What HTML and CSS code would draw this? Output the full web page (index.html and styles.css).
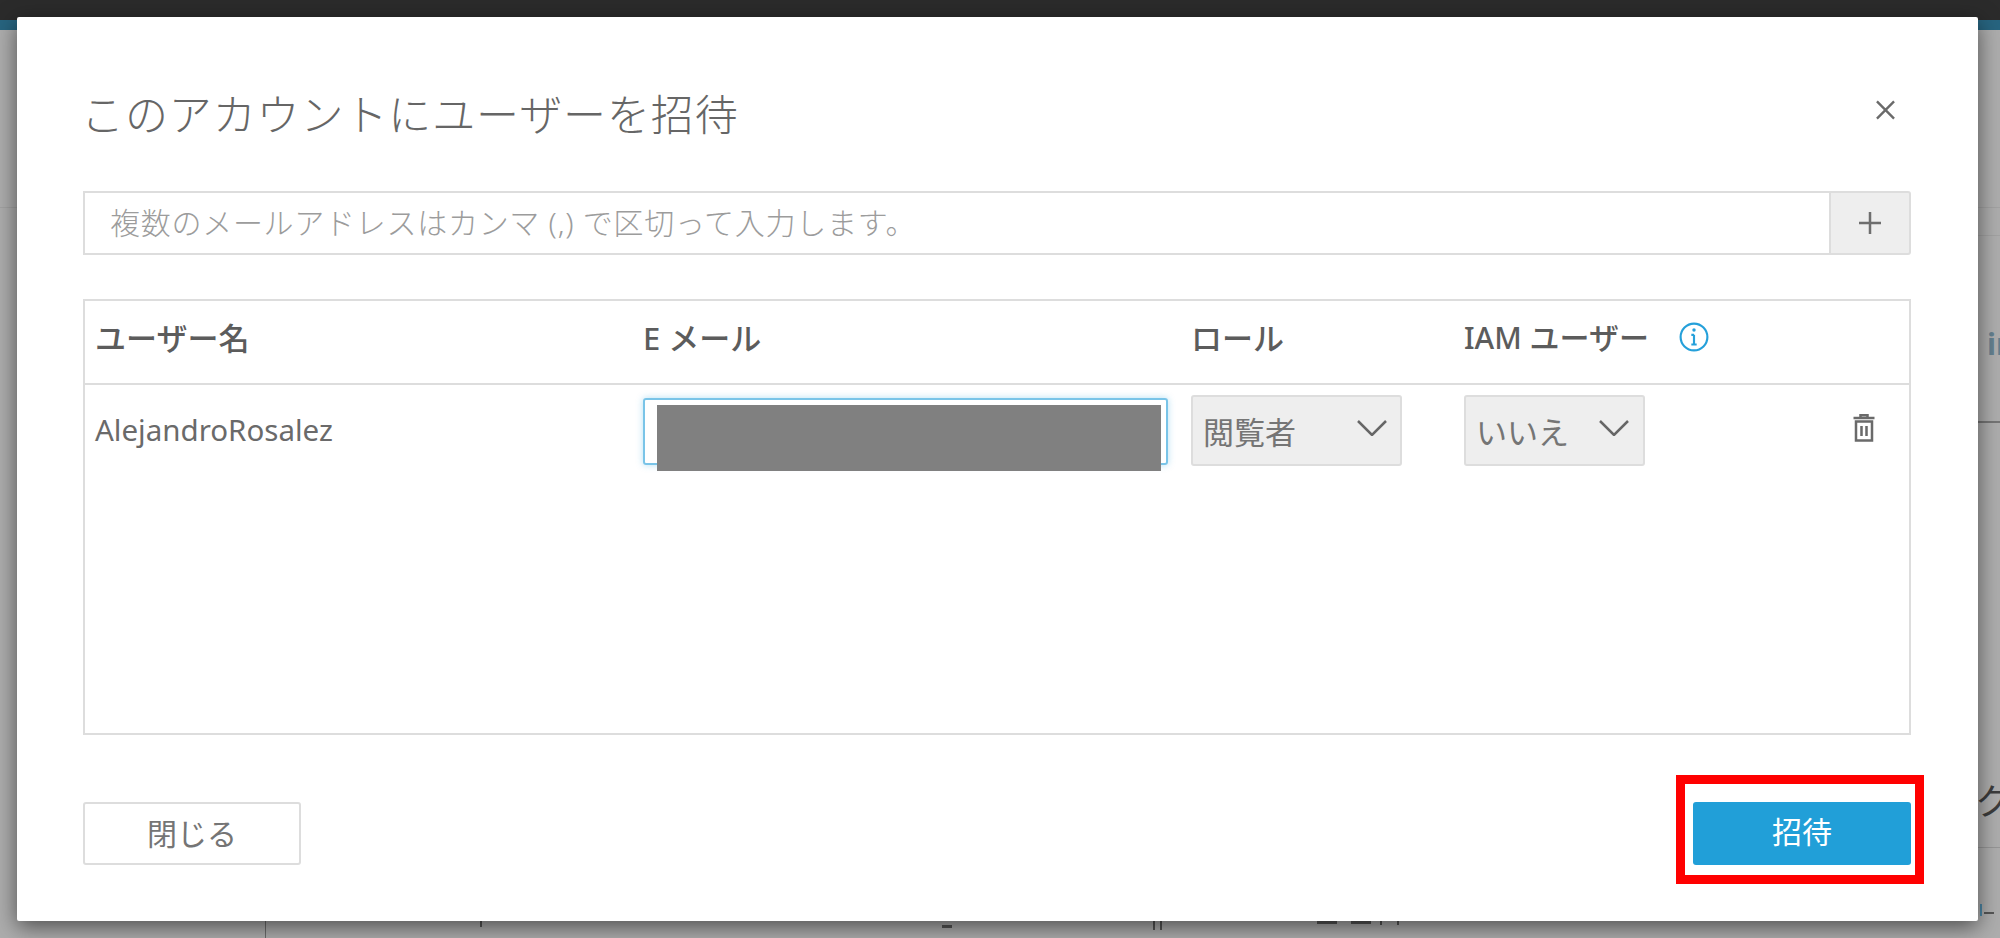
FILE: index.html
```html
<!DOCTYPE html>
<html>
  <head>
    <title>このアカウントにユーザーを招待</title>
    <link rel="stylesheet" href="styles.css">
  </head>

  <body>
    <div class="page-behind">
      <div class="top-bar"></div>
      <div class="nav-bar"></div>
      <div class="back-line line-207"></div>
      <div class="back-line line-235"></div>
      <div class="back-line line-421"></div>
      <div class="back-line line-847"></div>
      <div class="back-text text-in">in</div>
      <div class="back-text text-ku">ク</div>
      <div class="back-mark mark-v"></div>
      <div class="back-mark mark-a"></div>
      <div class="back-mark mark-b"></div>
      <div class="back-mark mark-c"></div>
      <div class="back-mark mark-d"></div>
      <div class="back-mark mark-e"></div>
      <div class="back-mark mark-f"></div>
      <div class="back-mark mark-g"></div>
      <div class="back-mark mark-h"></div>
      <div class="back-mark mark-i"></div>
      <div class="back-mark mark-j"></div>
    </div>

    <div class="modal">
      <div class="modal-header">
        <h1 class="modal-title">このアカウントにユーザーを招待</h1>
        <svg class="close-icon" viewBox="0 0 20 20">
          <path d="M1 1 L19 19 M19 1 L1 19"></path>
        </svg>
      </div>

      <div class="add-row">
        <div class="add-input">複数のメールアドレスはカンマ (,) で区切って入力します。</div>
        <div class="add-button">
          <svg class="plus-icon" viewBox="0 0 22 22">
            <path d="M11 0 V22 M0 11 H22"></path>
          </svg>
        </div>
      </div>

      <div class="user-table">
        <div class="table-row table-head">
          <div>ユーザー名</div>
          <div>E メール</div>
          <div>ロール</div>
          <div class="iam-head">
            IAM ユーザー
            <svg class="info-icon" viewBox="0 0 28 28">
              <circle cx="14" cy="14" r="12.5"></circle>
              <path d="M14 12 V21 M11.5 21 H16.5 M11.5 12 H14"></path>
              <circle class="info-dot" cx="14" cy="7.5" r="1.6"></circle>
            </svg>
          </div>
        </div>

        <div class="table-row table-body">
          <div class="user-name">AlejandroRosalez</div>
          <div>
            <div class="email-input"><div class="redacted"></div></div>
          </div>
          <div>
            <div class="select role-select">
              閲覧者
              <svg class="chevron" viewBox="0 0 30 16"><path d="M1 1 L15 15 L29 1"></path></svg>
            </div>
          </div>
          <div class="last-cell">
            <div class="select iam-select">
              いいえ
              <svg class="chevron" viewBox="0 0 30 16"><path d="M1 1 L15 15 L29 1"></path></svg>
            </div>
            <svg class="trash-icon" viewBox="0 0 22 28">
              <path d="M7.5 3 V1.2 H14.5 V3"></path>
              <path d="M0.5 4 H21.5"></path>
              <path d="M3 7.5 H19 V26.5 H3 Z"></path>
              <path d="M8.5 12 V22 M13.5 12 V22"></path>
            </svg>
          </div>
        </div>
      </div>

      <div class="modal-footer">
        <div class="close-button">閉じる</div>
        <div class="invite-wrap">
          <div class="invite-button">招待</div>
          <div class="highlight"></div>
        </div>
      </div>
    </div>
  </body>
</html>
```

FILE: styles.css
```css
body {
  margin: 0;
  height: 938px;
  box-sizing: border-box;
  padding: 17px 22px 17px 17px;
  overflow: hidden;
  background-color: #adadad;
  font-family: "Noto Sans", "Noto Sans CJK JP", sans-serif;
  color: #666666;
}

/* page dimmed behind the dialog */
.top-bar {
  position: absolute;
  left: 0;
  top: 0;
  width: 100%;
  height: 20px;
  background-color: #2b2b2b;
}
.nav-bar {
  position: absolute;
  left: 0;
  top: 20px;
  width: 100%;
  height: 10px;
  background-color: #27647f;
}
.back-line {
  position: absolute;
  left: 1900px;
  width: 100px;
  height: 1px;
  background-color: #a2a2a2;
}
.line-207 { top: 207px; left: 0; width: 100%; }
.line-235 { top: 235px; }
.line-421 { top: 421px; height: 2px; background-color: #757575; }
.line-847 { top: 847px; background-color: #969696; }
.back-text {
  position: absolute;
  font-family: "Noto Sans", "Noto Sans CJK JP", sans-serif;
  line-height: 1;
}
.text-in {
  left: 1987px;
  top: 329px;
  font-size: 30px;
  font-weight: 700;
  color: #64808f;
}
.text-ku {
  left: 1975px;
  top: 784px;
  font-size: 36px;
  color: #3c3c3c;
}
.back-mark {
  position: absolute;
  background-color: #555555;
}
.mark-v { left: 265px; top: 921px; width: 1px; height: 17px; background-color: #6c6c6c; }
.mark-a { left: 480px; top: 921px; width: 2px; height: 6px; }
.mark-b { left: 942px; top: 925px; width: 10px; height: 3px; }
.mark-c { left: 1153px; top: 921px; width: 2px; height: 9px; }
.mark-d { left: 1160px; top: 921px; width: 2px; height: 9px; }
.mark-e { left: 1317px; top: 921px; width: 20px; height: 3px; }
.mark-f { left: 1351px; top: 921px; width: 20px; height: 3px; }
.mark-g { left: 1380px; top: 921px; width: 2px; height: 4px; }
.mark-h { left: 1397px; top: 921px; width: 2px; height: 4px; }
.mark-i { left: 1980px; top: 904px; width: 2px; height: 12px; background-color: #4d87a6; }
.mark-j { left: 1984px; top: 912px; width: 10px; height: 2px; }

/* dialog */
.modal {
  position: relative;
  height: 100%;
  box-sizing: border-box;
  padding: 0 67px 0 66px;
  display: flex;
  flex-direction: column;
  background-color: #ffffff;
  border-radius: 2px;
  box-shadow: 0 6px 22px rgba(0, 0, 0, 0.55);
}
.modal-header {
  display: flex;
  justify-content: space-between;
  align-items: flex-start;
  padding-top: 72px;
  margin-bottom: 50px;
}
.modal-title {
  margin: 0 0 0 -2px;
  font-size: 43px;
  line-height: 52px;
  font-weight: 300;
  letter-spacing: 0.9px;
  color: #666666;
}
.close-icon {
  width: 19px;
  height: 20px;
  margin: 11px 16px 0 0;
  fill: none;
  stroke: #6a6a6a;
  stroke-width: 2.5;
}
.add-row {
  display: flex;
  height: 64px;
  margin-bottom: 44px;
}
.add-input {
  flex: 1;
  box-sizing: border-box;
  padding-left: 25px;
  border: 2px solid #dddddd;
  border-right: 0;
  font-size: 30px;
  line-height: 60px;
  font-weight: 300;
  letter-spacing: 0.72px;
  color: #9c9c9c;
}
.add-button {
  width: 82px;
  box-sizing: border-box;
  display: flex;
  align-items: center;
  justify-content: center;
  background-color: #eeeeee;
  border: 2px solid #dddddd;
  border-radius: 0 3px 3px 0;
}
.plus-icon {
  width: 22px;
  height: 22px;
  fill: none;
  stroke: #6e6e6e;
  stroke-width: 2.5;
}

/* user table */
.user-table {
  height: 436px;
  box-sizing: border-box;
  border: 2px solid #dddddd;
}
.table-row {
  display: grid;
  grid-template-columns: 548px 548px 273px 1fr;
  padding-left: 10px;
}
.table-head {
  height: 84px;
  box-sizing: border-box;
  padding-bottom: 12px;
  align-items: center;
  border-bottom: 2px solid #dddddd;
  font-size: 31px;
  font-weight: 500;
  color: #5c5c5c;
}
.iam-head {
  display: flex;
  align-items: center;
  gap: 30px;
  font-size: 30px;
}
.info-icon {
  width: 30px;
  height: 30px;
  margin-top: 2px;
  fill: none;
  stroke: #25a0da;
  stroke-width: 2;
}
.info-dot {
  fill: #25a0da;
  stroke: none;
}
.table-body {
  padding-top: 10px;
}
.user-name {
  padding-top: 15px;
  font-size: 29.5px;
  line-height: 40px;
  color: #6a6a6a;
}
.email-input {
  position: relative;
  width: 525px;
  height: 67px;
  margin-top: 3px;
  box-sizing: border-box;
  border: 2px solid #79c4e8;
  border-radius: 3px;
  box-shadow: 0 0 7px rgba(37, 160, 218, 0.35);
}
.redacted {
  position: absolute;
  left: 12px;
  top: 5px;
  width: 504px;
  height: 66px;
  background-color: #808080;
}
.select {
  display: flex;
  align-items: center;
  justify-content: space-between;
  height: 71px;
  box-sizing: border-box;
  padding: 0 13px 0 10px;
  background-color: #eeeeee;
  border: 2px solid #dddddd;
  border-radius: 3px;
  font-size: 31px;
  color: #757575;
}
.role-select { width: 211px; }
.iam-select { width: 181px; padding-right: 14px; }
.chevron {
  width: 30px;
  height: 16px;
  margin-bottom: 5px;
  fill: none;
  stroke: #666666;
  stroke-width: 2.5;
}
.last-cell {
  display: flex;
  justify-content: space-between;
  align-items: flex-start;
  padding-right: 34px;
}
.trash-icon {
  width: 22px;
  height: 28px;
  margin-top: 19px;
  fill: none;
  stroke: #6a6a6a;
  stroke-width: 2.5;
}

/* footer buttons */
.modal-footer {
  display: flex;
  justify-content: space-between;
  margin-top: 67px;
}
.close-button,
.invite-button {
  width: 218px;
  height: 63px;
  box-sizing: border-box;
  border-radius: 3px;
  font-size: 30px;
  line-height: 60px;
  text-align: center;
}
.close-button {
  border: 2px solid #dddddd;
  color: #757575;
}
.invite-button {
  background-color: #219fd8;
  color: #ffffff;
}
.invite-wrap {
  position: relative;
}
.highlight {
  position: absolute;
  left: -17px;
  right: -13px;
  top: -27px;
  bottom: -19px;
  border: 9px solid #ff0000;
}
```
